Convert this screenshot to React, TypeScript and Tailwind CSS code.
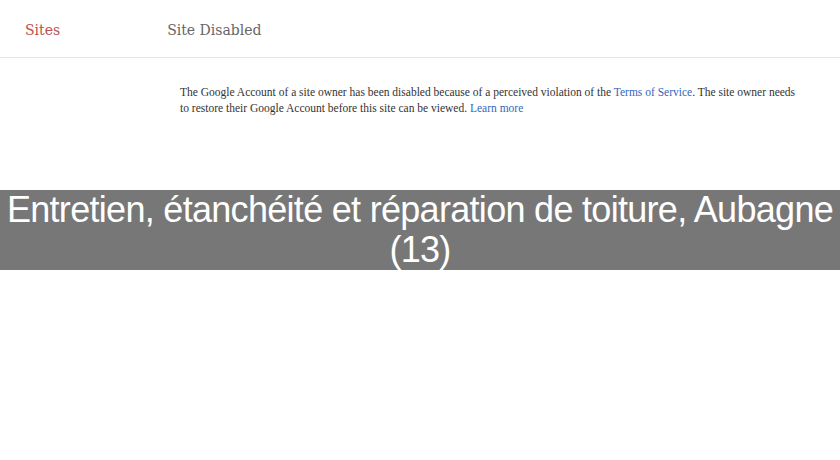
export default function App() {
  return (
    <div className="relative h-[460px] w-[840px] overflow-hidden bg-white">
      <header className="flex h-[58px] items-center border-b border-[#e6e6e6] pt-[4px] font-['DejaVu_Serif',serif]">
        <span className="ml-[25px] text-[14px] text-[#c0504d]">Sites</span>
        <span className="ml-[107px] text-[14px] text-[#666]">Site Disabled</span>
      </header>
      <div className="ml-[180px] mt-[26px] w-[622px] font-['Liberation_Serif',serif] text-[11.5px] leading-[16px] text-[#333]">
        The Google Account of a site owner has been disabled because of a perceived violation of the{" "}
        <a className="text-[#3366bb]">Terms of Service</a>. The site owner needs to restore their Google Account before this site can be viewed.{" "}
        <a className="text-[#3366bb]">Learn more</a>
      </div>
      <div className="absolute left-0 top-[190px] flex h-[80px] w-[840px] items-center justify-center bg-[#777777] px-[2px] text-center font-['Liberation_Sans',sans-serif] text-[36px] leading-[40px] tracking-[-0.7px] text-white">
        Entretien, étanchéité et réparation de toiture, Aubagne (13)
      </div>
    </div>
  );
}
